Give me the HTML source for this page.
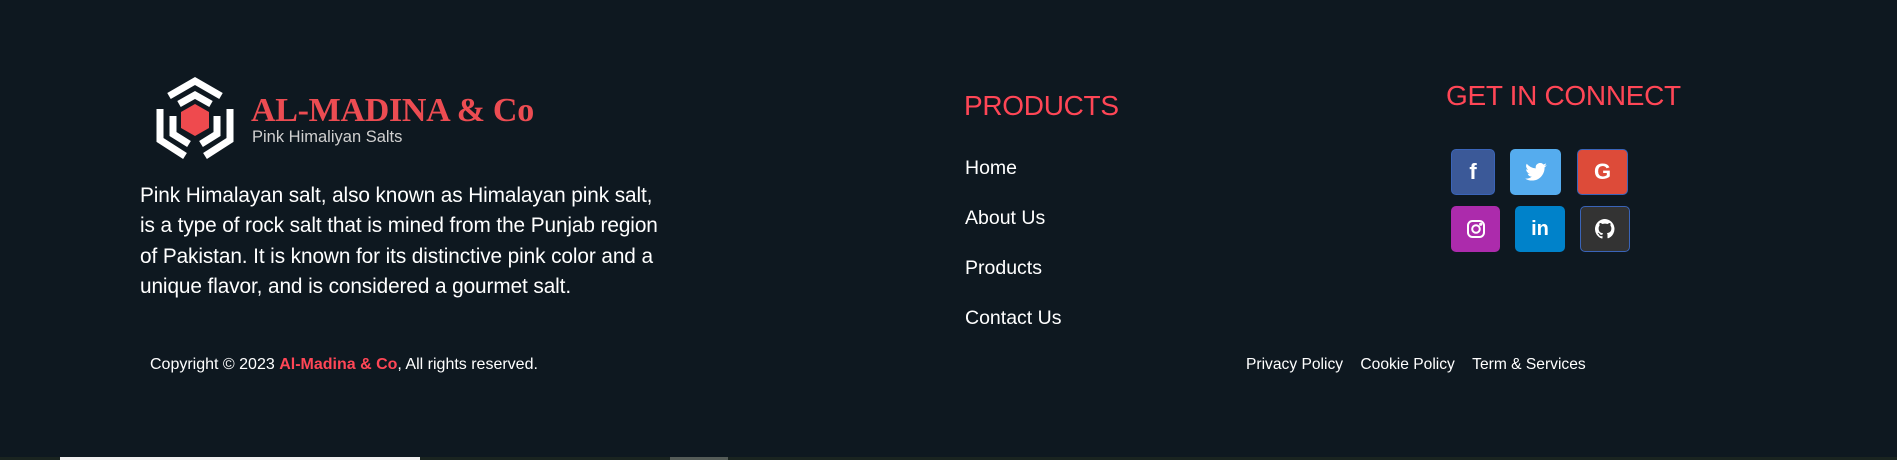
<!DOCTYPE html>
<html><head><meta charset="utf-8"><style>
*{margin:0;padding:0;box-sizing:border-box}
body{width:1897px;height:460px;background:#0e1820;font-family:"Liberation Sans",sans-serif;color:#fff;position:relative;overflow:hidden}
.a{position:absolute;white-space:nowrap}
.brand{font-family:"Liberation Serif",serif;font-weight:bold;color:#ec4c52;font-size:34px;left:251px;top:92px;letter-spacing:-0.3px}
.sub{left:252px;top:128px;font-size:16.5px;color:#d0d0d0}
.p{left:140px;top:181px;font-size:20.8px;line-height:30.3px;letter-spacing:-0.1px}
.h{color:#ff4656;font-size:28px;letter-spacing:-0.3px}
.l{font-size:19.5px}
.ic{position:absolute;border-radius:5px;display:flex;align-items:center;justify-content:center;border:1px solid #3a64b8}
.s{font-size:16px}
</style></head><body>
<svg class="a" style="left:155px;top:74px" width="80" height="92" viewBox="0 0 80 92">
<g fill="none" stroke="#fff" stroke-width="7">
<path d="M14 22 L40 7 L66 22"/>
<path d="M24 30 L40 21 L56 30"/>
<path d="M5 35 V66 L30 82"/>
<path d="M75 35 V66 L50 82"/>
<path d="M18 42 V60 L34 70"/>
<path d="M62 42 V60 L46 70"/>
</g>
<polygon points="40,30 54,38 54,54 40,62 26,54 26,38" fill="#ef4a4e"/>
</svg>
<div class="a brand">AL-MADINA &amp; Co</div>
<div class="a sub">Pink Himaliyan Salts</div>
<div class="a p">Pink Himalayan salt, also known as Himalayan pink salt,<br>is a type of rock salt that is mined from the Punjab region<br>of Pakistan. It is known for its distinctive pink color and a<br>unique flavor, and is considered a gourmet salt.</div>
<div class="a h" style="left:964px;top:90px">PRODUCTS</div>
<div class="a l" style="left:965px;top:157px">Home</div>
<div class="a l" style="left:965px;top:207px">About Us</div>
<div class="a l" style="left:965px;top:257px">Products</div>
<div class="a l" style="left:965px;top:307px">Contact Us</div>
<div class="a h" style="left:1446px;top:80px">GET IN CONNECT</div>
<div class="ic" style="left:1451px;top:149px;width:44px;height:46px;background:#3b5998"><b style="font-size:22px">f</b></div>
<div class="ic" style="left:1510px;top:149px;width:51px;height:46px;background:#55acee;border-color:#55acee"><svg width="22" height="18" viewBox="0 0 24 20"><path fill="#fff" d="M24 2.4a10 10 0 0 1-2.8.8A5 5 0 0 0 23.3.4a10 10 0 0 1-3.1 1.2A4.9 4.9 0 0 0 11.8 6 14 14 0 0 1 1.7.9a4.9 4.9 0 0 0 1.5 6.6A5 5 0 0 1 1 6.9a4.9 4.9 0 0 0 3.9 4.8 5 5 0 0 1-2.2.1 4.9 4.9 0 0 0 4.6 3.4A9.9 9.9 0 0 1 0 17.3 14 14 0 0 0 7.5 19.5c9 0 14-7.5 14-14v-.6A10 10 0 0 0 24 2.4z"/></svg></div>
<div class="ic" style="left:1577px;top:149px;width:51px;height:46px;background:#dd4b39"><b style="font-size:22px">G</b></div>
<div class="ic" style="left:1451px;top:206px;width:49px;height:46px;background:#ac2bac;border-color:#ac2bac"><svg width="18" height="18" viewBox="0 0 18 18" fill="none" stroke="#fff" stroke-width="2"><rect x="1" y="1" width="16" height="16" rx="4.5"/><circle cx="9" cy="9" r="3.8"/><circle cx="13.7" cy="4.3" r=".6" fill="#fff"/></svg></div>
<div class="ic" style="left:1515px;top:206px;width:50px;height:46px;background:#0082ca;border-color:#0082ca"><b style="font-size:20px">in</b></div>
<div class="ic" style="left:1580px;top:206px;width:50px;height:46px;background:#333"><svg width="20" height="20" viewBox="0 0 16 16"><path fill="#fff" d="M8 0a8 8 0 0 0-2.5 15.6c.4 0 .5-.2.5-.4v-1.5c-2.2.5-2.7-1-2.7-1-.4-.9-.9-1.2-.9-1.2-.7-.5.1-.5.1-.5.8.1 1.2.8 1.2.8.7 1.3 1.9.9 2.3.7.1-.5.3-.9.5-1.1-1.8-.2-3.6-.9-3.6-4 0-.9.3-1.6.8-2.1-.1-.2-.4-1 .1-2.1 0 0 .7-.2 2.2.8a7.5 7.5 0 0 1 4 0c1.5-1 2.2-.8 2.2-.8.4 1.1.2 1.9.1 2.1.5.6.8 1.3.8 2.1 0 3.1-1.9 3.7-3.6 3.9.3.3.5.8.5 1.5v2.2c0 .2.1.5.6.4A8 8 0 0 0 8 0z"/></svg></div>
<div class="a s" style="left:150px;top:356px">Copyright © 2023 <b style="color:#ff4656">Al-Madina &amp; Co</b>, All rights reserved.</div>
<div class="a s" style="left:1246px;top:356px;font-size:15.6px">Privacy Policy&nbsp;&nbsp;&nbsp;&nbsp;Cookie Policy&nbsp;&nbsp;&nbsp;&nbsp;Term &amp; Services</div>
<div class="a" style="left:0;top:457px;width:1897px;height:3px;background:#1a2420"></div>
<div class="a" style="left:60px;top:457px;width:360px;height:3px;background:#f0f0f0"></div>
<div class="a" style="left:670px;top:457px;width:58px;height:3px;background:#555c58"></div>
</body></html>
